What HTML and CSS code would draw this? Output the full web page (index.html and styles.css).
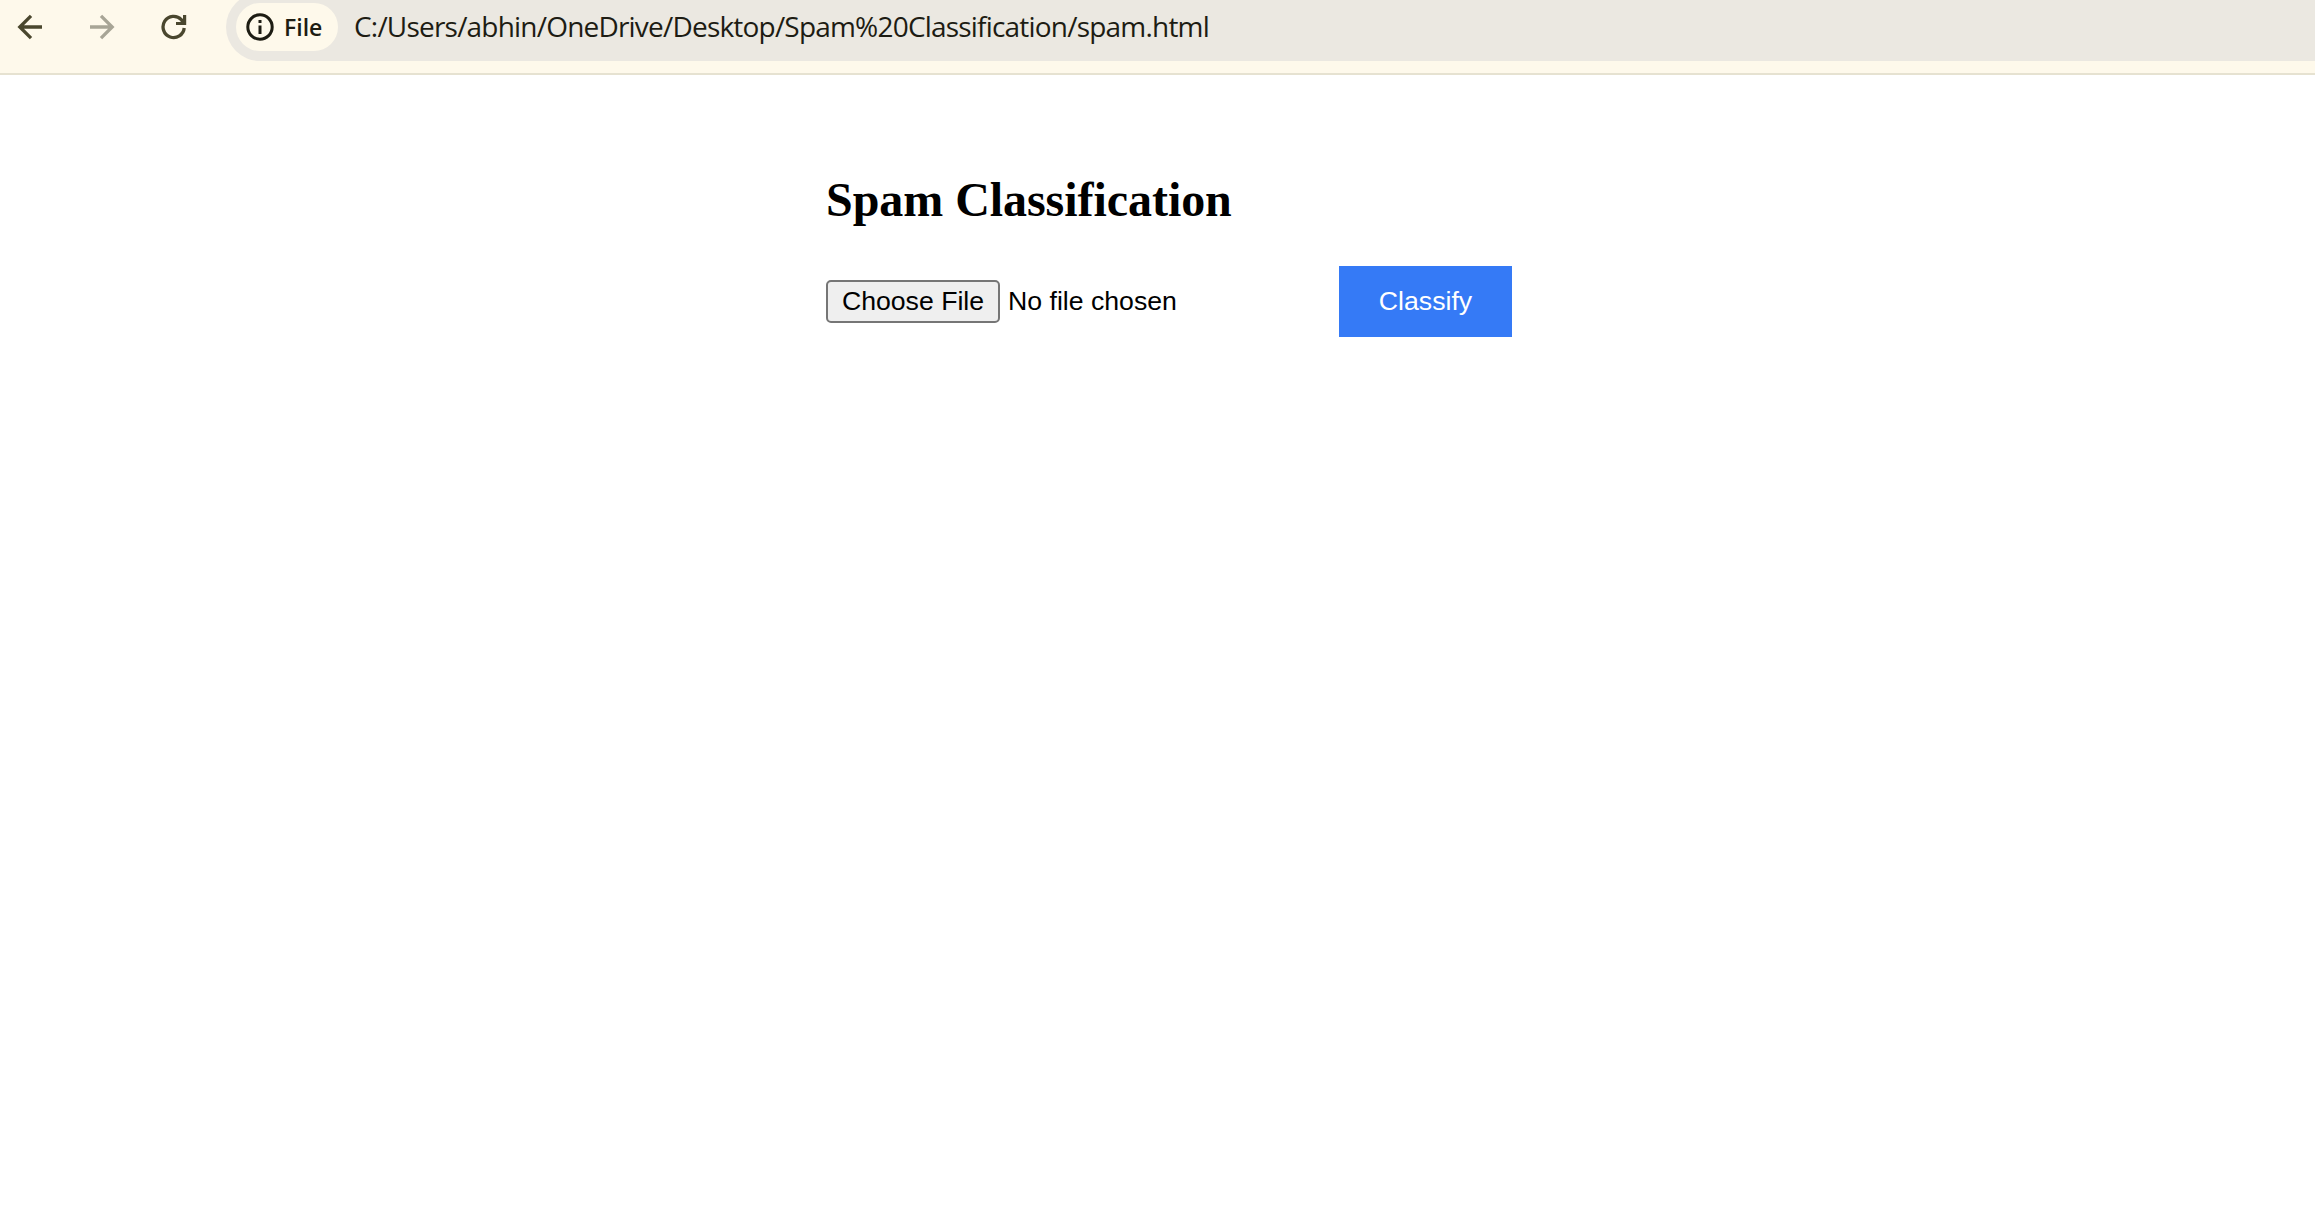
FILE: index.html
```html
<!DOCTYPE html>
<html lang="en">
<head>
<meta charset="utf-8">
<title>Spam Classification</title>
<link rel="stylesheet" href="styles.css">
</head>
<body>
<header class="toolbar">
  <nav class="nav">
    <svg class="icon" viewBox="0 0 26 26"><path d="M25 13H2.8M14 1.8L2.8 13L14 24.2"/></svg>
    <svg class="icon icon-disabled" viewBox="0 0 26 26"><path d="M1 13H23.2M12 1.8L23.2 13L12 24.2"/></svg>
    <svg class="icon" viewBox="0 0 26 26"><path d="M23.2 14A10.6 10.6 0 1 1 20.3 5.6L22 8"/><path class="solid" d="M25.2 1V11H15V8H19.5L22 6V1Z"/></svg>
  </nav>
  <div class="address">
    <div class="chip">
      <svg class="info" viewBox="0 0 28 28"><circle cx="14" cy="14" r="12.2"/><path d="M14 12.5V21M14 7V10"/></svg>
      <span class="chip-label">File</span>
    </div>
    <span class="url">C:/Users/abhin/OneDrive/Desktop/Spam%20Classification/spam.html</span>
  </div>
</header>
<main class="content">
  <h2 class="title">Spam Classification</h2>
  <form class="form">
    <div class="picker">
      <button class="choose" type="button">Choose File</button>
      <span>No file chosen</span>
    </div>
    <button class="classify" type="button">Classify</button>
  </form>
</main>
</body>
</html>
```
FILE: styles.css
```css
* { box-sizing: border-box; }
body { margin: 0; background: #fff; color: #000; }
.toolbar {
  display: flex;
  align-items: flex-start;
  height: 75px;
  background: #fef9eb;
  border-bottom: 2px solid #e6e2d1;
}
.nav { display: flex; gap: 46px; width: 226px; padding: 14px 0 0 17px; }
.icon { width: 26px; height: 26px; flex: none; fill: none; stroke: #4a472e; stroke-width: 3.3; }
.icon-disabled { stroke: #a8a596; }
.solid { fill: #4a472e; stroke: none; }
.address {
  display: flex;
  flex: 1;
  align-items: center;
  height: 68px;
  margin-top: -7px;
  padding-left: 10px;
  border-radius: 34px 0 0 34px;
  background: #ebe8e1;
  color: #1d1c13;
  font-family: "Open Sans", sans-serif;
}
.chip {
  display: flex;
  align-items: center;
  gap: 10px;
  width: 102px;
  height: 48px;
  padding-left: 10px;
  border-radius: 24px;
  background: #fef9eb;
}
.info { width: 28px; height: 28px; flex: none; fill: none; stroke: #1d1c13; stroke-width: 3; }
.chip-label { padding-bottom: 1px; font-size: 23px; font-weight: 600; }
.url { margin-left: 16px; padding-bottom: 2px; font-size: 28px; letter-spacing: -0.8px; white-space: nowrap; }
.content { width: 686px; margin: 97px 0 0 826px; }
.title {
  margin: 0 0 39px;
  font: bold 48px/55px "Liberation Serif", serif;
  letter-spacing: -0.05px;
  font-variant-ligatures: common-ligatures;
  white-space: nowrap;
}
.form {
  display: flex;
  align-items: center;
  justify-content: space-between;
  font: 26.667px/31px "Liberation Sans", sans-serif;
}
.picker { display: flex; align-items: center; gap: 8px; }
.choose {
  width: 174px;
  height: 43px;
  padding: 0;
  border: 2px solid #767676;
  border-radius: 5px;
  background: #efefef;
  color: #000;
  font: inherit;
}
.classify {
  width: 173px;
  height: 71px;
  padding: 0;
  border: 0;
  background: #357af6;
  color: #fff;
  font: inherit;
}
```
